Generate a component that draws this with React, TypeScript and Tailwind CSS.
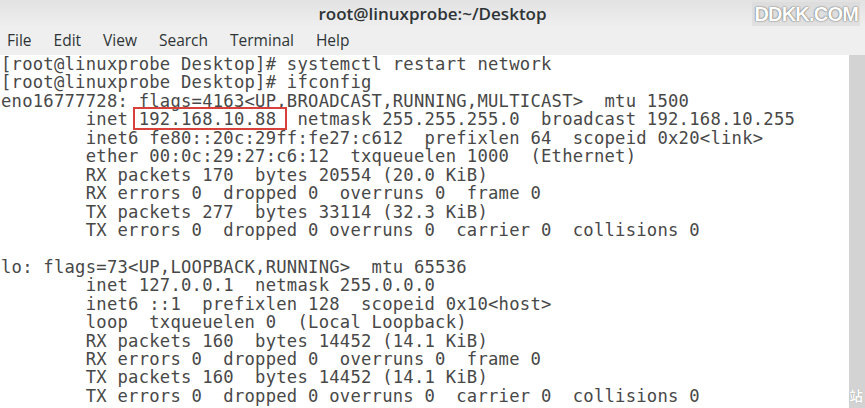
const lines: string[] = [
  "[root@linuxprobe Desktop]# systemctl restart network",
  "[root@linuxprobe Desktop]# ifconfig",
  "eno16777728: flags=4163<UP,BROADCAST,RUNNING,MULTICAST>  mtu 1500",
  "INET",
  "        inet6 fe80::20c:29ff:fe27:c612  prefixlen 64  scopeid 0x20<link>",
  "        ether 00:0c:29:27:c6:12  txqueuelen 1000  (Ethernet)",
  "        RX packets 170  bytes 20554 (20.0 KiB)",
  "        RX errors 0  dropped 0  overruns 0  frame 0",
  "        TX packets 277  bytes 33114 (32.3 KiB)",
  "        TX errors 0  dropped 0 overruns 0  carrier 0  collisions 0",
  "",
  "lo: flags=73<UP,LOOPBACK,RUNNING>  mtu 65536",
  "        inet 127.0.0.1  netmask 255.0.0.0",
  "        inet6 ::1  prefixlen 128  scopeid 0x10<host>",
  "        loop  txqueuelen 0  (Local Loopback)",
  "        RX packets 160  bytes 14452 (14.1 KiB)",
  "        RX errors 0  dropped 0  overruns 0  frame 0",
  "        TX packets 160  bytes 14452 (14.1 KiB)",
  "        TX errors 0  dropped 0 overruns 0  carrier 0  collisions 0",
];

const menu = ["File", "Edit", "View", "Search", "Terminal", "Help"];

function TermLine({ text }: { text: string }) {
  if (text === "INET") {
    // highlighted address, boxed in red
    return (
      <div className="h-[18.45px] whitespace-pre">
        {"        inet "}
        <span className="relative">
          <span className="absolute -left-[6px] -right-[11px] -top-[2px] -bottom-[1px] border-2 border-[#d8403c]" />
          192.168.10.88
        </span>
        {"  netmask 255.255.255.0  broadcast 192.168.10.255"}
      </div>
    );
  }
  return <div className="h-[18.45px] whitespace-pre">{text || " "}</div>;
}

export default function App() {
  return (
    <div className="w-[865px] h-[408px] overflow-hidden bg-white flex flex-col">
      <div className="relative h-[27px] shrink-0 bg-gradient-to-b from-[#e2e2e2] to-[#efefef] flex items-center justify-center">
        <span className="font-['Open_Sans',sans-serif] font-semibold text-[17px] text-[#2e3436]">
          root@linuxprobe:~/Desktop
        </span>
        <div className="absolute right-[5px] top-[2px] px-[2px] bg-[#d9d9d9]/60 font-['Liberation_Sans',sans-serif] font-bold text-[20px] leading-[24px] tracking-[-0.8px] text-white [text-shadow:0_0_1px_#555,0_0_2px_#888]">
          DDKK.COM
        </div>
      </div>
      <div className="h-[28px] shrink-0 bg-[#efefef] flex items-center gap-[22px] pl-[7px] font-['Open_Sans',sans-serif] text-[15.5px] text-[#2e3436]">
        {menu.map((m) => (
          <span key={m}>{m}</span>
        ))}
      </div>
      <div className="flex flex-1 min-h-0">
        <div className="flex-1 pl-[1px] font-['DejaVu_Sans_Mono',monospace] text-[17.2px] tracking-[0.24px] leading-[18.45px] text-[#484848]">
          {lines.map((l, i) => (
            <TermLine key={i} text={l} />
          ))}
        </div>
        <div className="relative w-[16px] shrink-0 bg-[#d3d3d3]">
          <span className="absolute bottom-[2px] left-[0px] font-['Noto_Sans_CJK_SC',sans-serif] font-bold text-[14px] text-white [text-shadow:0_0_1px_#888]">
            站
          </span>
        </div>
      </div>
    </div>
  );
}
